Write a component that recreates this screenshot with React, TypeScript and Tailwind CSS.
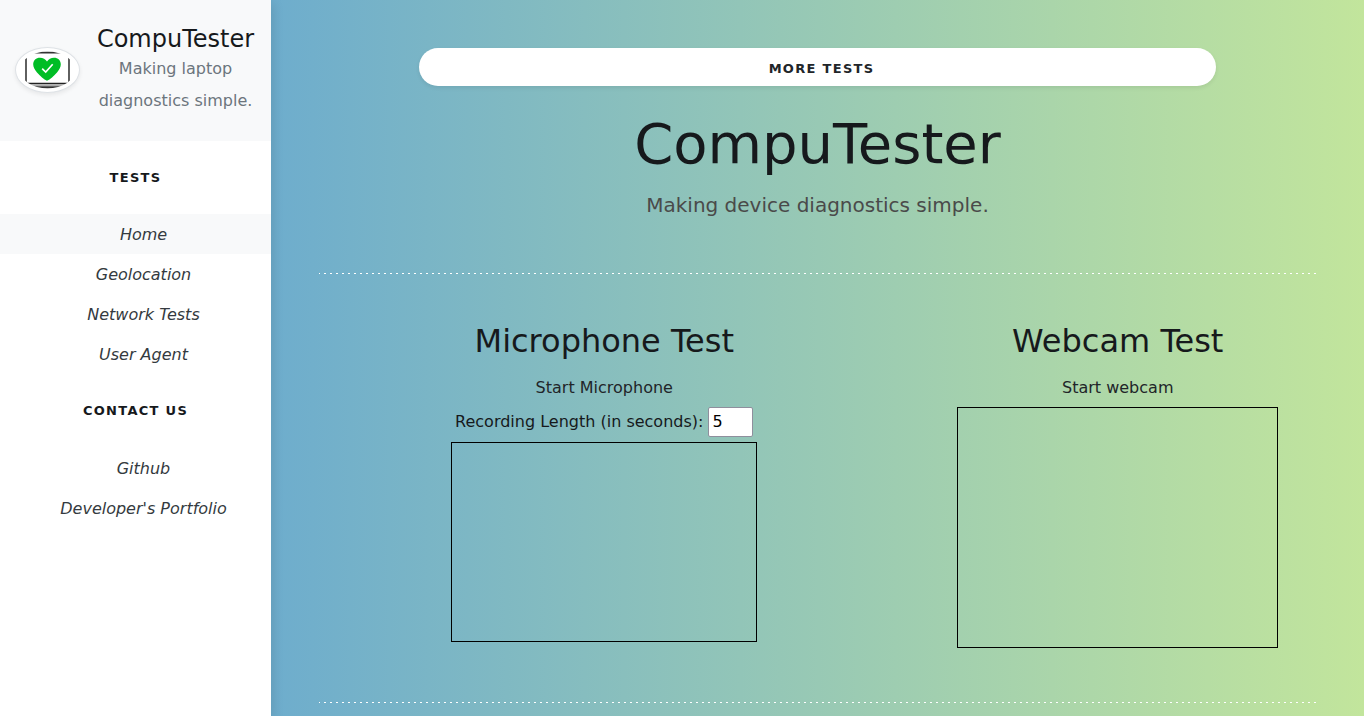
const testLinks = ["Home", "Geolocation", "Network Tests", "User Agent"];
const contactLinks = ["Github", "Developer's Portfolio"];

function Logo() {
  return (
    <svg viewBox="0 0 63 44" className="mb-0.5 h-[46px] w-[65px] shrink-0 rounded-[50%] border border-[#dee2e6] bg-white shadow-[0_2px_4px_rgba(0,0,0,0.075)]" role="img" aria-label="CompuTester logo">
      <defs>
        <clipPath id="logo-clip">
          <ellipse cx="31.5" cy="22" rx="27.5" ry="18.5" />
        </clipPath>
      </defs>
      <g clipPath="url(#logo-clip)" fill="none">
        <path d="M10 4V35M53 4V35" stroke="#444" strokeWidth="1.7" />
        <path d="M16 4.5H47" stroke="#333" strokeWidth="1.8" />
        <path d="M8 35.5H55" stroke="#222" strokeWidth="1.4" />
        <path d="M8 37.2H55" stroke="#aaa" strokeWidth="2" />
        <path d="M8 39.4H55" stroke="#333" strokeWidth="2.2" />
      </g>
      <path d="M31 32.7C28 31.5 24 28 21 24.5C18.500 21.500 17.200 19 17.200 16.300C17.200 12.500 20 9.800 24 9.800C27 9.800 29.500 11.200 31 13.600C32.500 11.200 35 9.800 38 9.800C42 9.800 44.800 12.500 44.800 16.300C44.800 19 43.500 21.500 41 24.500C38 28 34 31.500 31 32.700Z" fill="#00bd25" />
      <path d="M26.200 20.700L29.700 24L36.700 16.300" fill="none" stroke="#fff" strokeWidth="1.700" />
    </svg>
  );
}

function NavHeading({ children }: { children: string }) {
  return (
    <p className="px-4 py-6 text-center text-[13px] leading-[25px] font-bold tracking-widest text-[#16191c] uppercase">
      {children}
    </p>
  );
}

function NavList({ items, active }: { items: string[]; active?: string }) {
  return (
    <ul className="flex flex-col">
      {items.map((item) => (
        <li key={item}>
          <a
            href="#"
            aria-current={item === active ? "page" : undefined}
            className={
              item === active
                ? "block bg-[#f8f9fa] pt-[9px] pr-4 pb-[7px] pl-8 text-center text-[#343a40] italic"
                : "block pt-[9px] pr-4 pb-[7px] pl-8 text-center text-[#343a40] italic"
            }
          >
            {item}
          </a>
        </li>
      ))}
    </ul>
  );
}

function Sidebar() {
  return (
    <aside className="z-10 w-[271px] shrink-0 bg-white shadow-[3px_3px_10px_rgba(0,0,0,0.1)]">
      <div className="flex items-center gap-4 bg-[#f8f9fa] pt-[25px] pr-4 pb-6 pl-[15px]">
        <Logo />
        <div className="flex-1 text-center">
          <h4 className="text-2xl leading-7 whitespace-nowrap text-[#16191c]">CompuTester</h4>
          <p className="leading-8 text-[#6c757d]">Making laptop diagnostics simple.</p>
        </div>
      </div>
      <NavHeading>Tests</NavHeading>
      <NavList items={testLinks} active="Home" />
      <NavHeading>Contact us</NavHeading>
      <div className="pt-[1px]">
        <NavList items={contactLinks} />
      </div>
    </aside>
  );
}

function Separator() {
  return (
    <div className="h-px bg-[repeating-linear-gradient(to_right,#fff_0_1px,transparent_1px_5px,#fff_5px_6px)]" />
  );
}

export default function App() {
  return (
    <div className="flex min-h-screen bg-linear-to-r/srgb from-[#599fd9] to-[#c2e59c] font-['DejaVu_Sans',sans-serif] text-base text-[#16191c]">
      <Sidebar />
      <main className="min-w-0 flex-1 px-12 pt-12 pb-3">
        <div className="text-center">
          <button type="button" className="mx-auto block h-[38px] w-4/5 rounded-full bg-white pt-[3px] pl-2 text-[13px] font-bold tracking-widest text-[#212529] uppercase shadow-[0_2px_4px_rgba(0,0,0,0.075)]">
            More tests
          </button>
          <h2 className="mt-6 text-[56px] leading-[67px]">CompuTester</h2>
          <p className="mt-[13px] text-xl leading-[30px] text-[#4a4a4a]">Making device diagnostics simple.</p>
        </div>
        <div className="pt-[53px]">
          <Separator />
        </div>
        <div className="-mx-[15px] mt-12 grid grid-cols-2 text-center">
          <section className="flex flex-col items-center pl-[87px]">
            <h2 className="text-[32px] leading-[38px]">Microphone Test</h2>
            <button type="button" className="mt-4 h-[24px] leading-6 text-[#212529]">Start Microphone</button>
            <div className="mt-[7px] flex items-center gap-[5px] whitespace-nowrap">
              <label htmlFor="recording-length">Recording Length (in seconds):</label>
              <input id="recording-length" type="text" inputMode="numeric" defaultValue="5" className="h-[30px] w-[45px] rounded-[2px] border border-[#8f8f9d] bg-white px-[3px] pb-[2px] text-black" />
            </div>
            <div className="mt-[5px] h-[200px] w-[306px] border border-black" />
          </section>
          <section className="flex flex-col items-center pl-[87px]">
            <h2 className="text-[32px] leading-[38px]">Webcam Test</h2>
            <button type="button" className="mt-4 h-[24px] leading-6 text-[#212529]">Start webcam</button>
            <div className="mt-[7px] h-[241px] w-[321px] border border-black" />
          </section>
        </div>
        <div className="pt-[54px]">
          <Separator />
        </div>
      </main>
    </div>
  );
}
